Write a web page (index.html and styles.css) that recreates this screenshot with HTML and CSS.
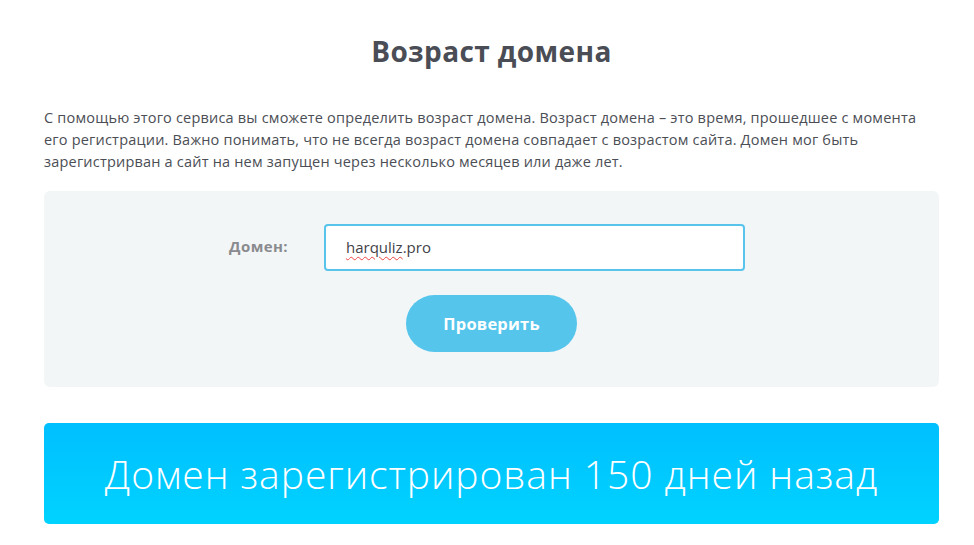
FILE: index.html
```html
<!DOCTYPE html>
<html lang="ru">
<head>
<meta charset="utf-8">
<link rel="stylesheet" href="styles.css">
</head>
<body>
<main class="page">
  <h1 class="title">Возраст домена</h1>
  <p class="intro">С помощью этого сервиса вы сможете определить возраст домена. Возраст домена – это время, прошедшее с момента его регистрации. Важно понимать, что не всегда возраст домена совпадает с возрастом сайта. Домен мог быть зарегистрирван а сайт на нем запущен через несколько месяцев или даже лет.</p>
  <form class="panel">
    <div class="row">
      <label class="label" for="domain">Домен:</label>
      <div class="field"><span class="typed">harquliz</span>.pro</div>
    </div>
    <div class="actions">
      <button type="button" class="btn">Проверить</button>
    </div>
  </form>
  <div class="result">Домен зарегистрирован 150 дней назад</div>
</main>
</body>
</html>
```
FILE: styles.css
```css
html, body { margin: 0; padding: 0; background: #fff; }
body { font-family: "Open Sans", "DejaVu Sans", sans-serif; color: #4b4e55; }
.page { width: 895px; margin-left: 44px; padding-top: 33px; }
.title { margin: 0; text-align: center; font-size: 28px; font-weight: 700; line-height: 36px; letter-spacing: 0.4px; color: #4a4d55; }
.intro { margin: 38px 0 0; font-size: 14.5px; line-height: 22px; letter-spacing: 0.2px; color: #4b4e55; }
.panel { margin-top: 18px; background: #f3f6f7; border-radius: 6px; height: 196px; box-sizing: border-box; padding-top: 33px; }
.row { display: flex; align-items: center; }
.label { width: 244px; text-align: right; font-size: 15px; font-weight: 700; letter-spacing: 0.4px; color: #8a8b8e; margin-right: 36px; position: relative; top: -2px; }
.field { width: 421px; height: 47px; box-sizing: border-box; border: 2px solid #58c4ec; border-radius: 4px; background: #fff; padding-left: 20px; font-size: 15px; line-height: 43px; color: #3f4247; }
.typed { text-decoration: underline wavy #e44; text-decoration-thickness: 1px; text-underline-offset: 3px; }
.actions { display: flex; justify-content: flex-start; padding-left: 362px; margin-top: 24px; }
.btn { width: 171px; height: 57px; border: 0; border-radius: 29px; background: #55c5ec; color: #fff; font-family: inherit; font-size: 16.5px; font-weight: 700; letter-spacing: 0.2px; }
.result { margin-top: 36px; height: 101px; border-radius: 5px; background: linear-gradient(#00bfff, #00d3ff); color: #fff; font-size: 39px; font-weight: 300; letter-spacing: 0.95px; display: flex; align-items: center; justify-content: center; }
```
